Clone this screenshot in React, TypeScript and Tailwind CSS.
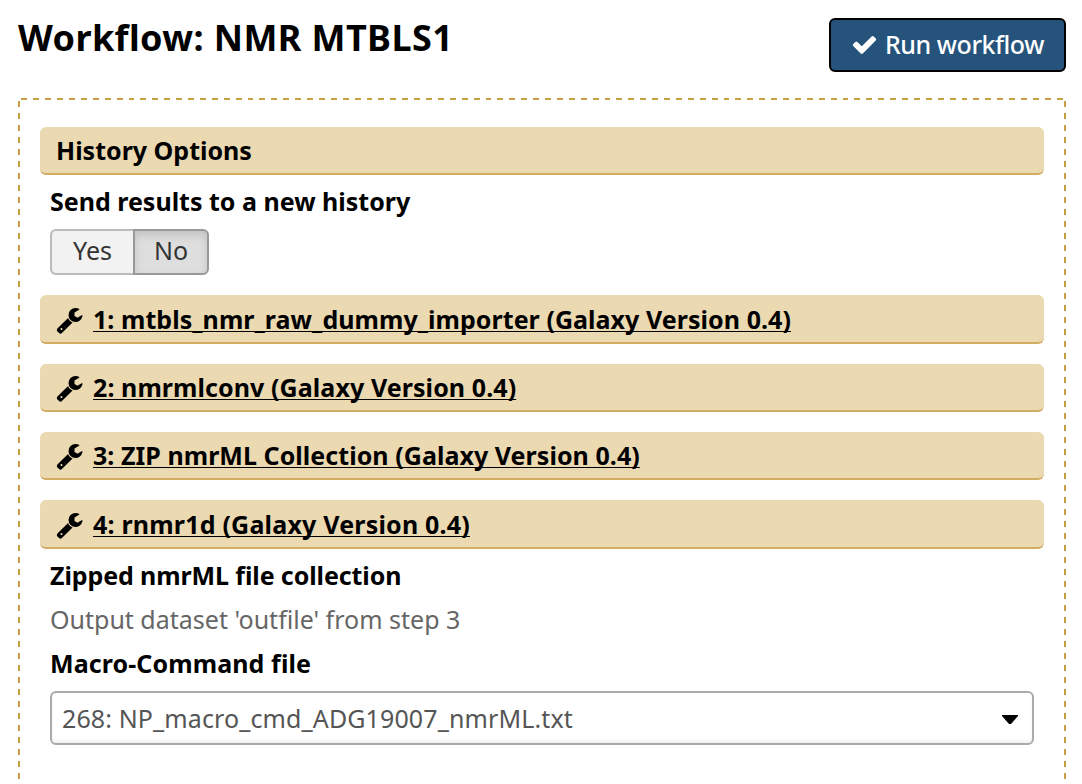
import React from "react";

function CheckIcon() {
  return (
    <svg viewBox="0 0 1792 1792" className="-mt-px h-[27px] w-[27px] shrink-0 fill-white">
      <path d="M1671 566q0 40-28 68l-724 724-136 136q-28 28-68 28t-68-28l-136-136-362-362q-28-28-28-68t28-68l136-136q28-28 68-28t68 28l294 295 656-657q28-28 68-28t68 28l136 136q28 28 28 68z" />
    </svg>
  );
}

function WrenchIcon() {
  return (
    <svg viewBox="0 0 1792 1792" className="mt-0.5 h-7 w-[29px] shrink-0 fill-black">
      <path d="M448 1472q0-26-19-45t-45-19-45 19-19 45 19 45 45 19 45-19 19-45zm644-420l-682 682q-37 37-90 37-52 0-91-37l-106-108q-38-36-38-90 0-53 38-91l681-681q39 98 114.5 173.5t173.5 114.5zm634-435q0 39-23 106-47 134-164.5 217.5t-258.5 83.5q-185 0-316.5-131.5t-131.5-316.5 131.5-316.5 316.5-131.5q58 0 121.5 16.5t107.5 46.5q16 11 16 28t-16 28l-293 169v224l193 107q5-3 79-48.5t135.5-81 70.5-35.5q15 0 23.5 10t8.5 25z" />
    </svg>
  );
}

const bar =
  "flex items-center rounded-md border-b-2 border-[#d3ac63] bg-[#ebd9b2] shrink-0";

const label = "ml-[10px] h-8 shrink-0 leading-8";

function Step({ title, className }: { title: string; className: string }) {
  return (
    <div className={`${bar} mt-5 pl-[15px] ${className}`}>
      <WrenchIcon />
      <a className="ml-[9px] h-7 leading-7 underline decoration-1 underline-offset-[2px] [text-decoration-skip-ink:none]">
        {title}
      </a>
    </div>
  );
}

export default function App() {
  return (
    <div className="flex h-[784px] w-[1082px] flex-col overflow-hidden bg-white pr-4 pl-[18px] font-['Noto_Sans','Open_Sans',sans-serif] text-[25px] whitespace-nowrap text-black">
      <header className="flex h-[98px] shrink-0 items-start justify-between pt-[18px]">
        <h1 className="text-[36px] leading-10 font-bold tracking-[0.4px]">Workflow: NMR MTBLS1</h1>
        <button className="flex h-[54px] w-[237px] items-center rounded-md border-2 border-black bg-[#25537b] pl-5 text-white">
          <CheckIcon />
          <span className="ml-[7px] font-medium tracking-[-0.45px]">Run workflow</span>
        </button>
      </header>
      <main className="flex h-[720px] shrink-0 flex-col bg-[image:repeating-linear-gradient(90deg,transparent_0_3.5px,#c6a041_3.5px_9.4px,transparent_9.4px_11.9px),repeating-linear-gradient(180deg,transparent_0_3px,#c6a041_3px_9px,transparent_9px_12px),repeating-linear-gradient(180deg,transparent_0_3px,#c6a041_3px_9px,transparent_9px_12px)] bg-[size:100%_2px,2px_100%,2px_100%] bg-[position:left_top,left_top,right_top] bg-no-repeat px-[22px] pt-[29px] font-bold">
        <div className={`${bar} h-12 pt-0.5 pl-4`}>History Options</div>
        <div className={`${label} mt-[10px]`}>Send results to a new history</div>
        <div className="mt-3 ml-[10px] flex h-[46px] shrink-0 font-normal text-[#333]">
          <button className="w-[83px] rounded-l-md border-2 border-r-0 border-[#bbb] bg-[#f2f2f2] pb-0.5">Yes</button>
          <button className="w-[76px] rounded-r-md border-2 border-[#999] bg-[#dedede] pb-0.5 shadow-[inset_0_4px_8px_rgba(0,0,0,0.13)]">No</button>
        </div>
        <Step title="1: mtbls_nmr_raw_dummy_importer (Galaxy Version 0.4)" className="h-[49px] tracking-[0.05px]" />
        <Step title="2: nmrmlconv (Galaxy Version 0.4)" className="h-12 tracking-[0.08px]" />
        <Step title="3: ZIP nmrML Collection (Galaxy Version 0.4)" className="h-12 tracking-[0.05px]" />
        <Step title="4: rnmr1d (Galaxy Version 0.4)" className="h-[49px] tracking-[0.2px]" />
        <div className={`${label} mt-[10px] tracking-[-0.1px]`}>Zipped nmrML file collection</div>
        <div className={`${label} mt-3 font-normal text-[#666]`}>Output dataset 'outfile' from step 3</div>
        <div className={`${label} mt-3 tracking-[0.1px]`}>Macro-Command file</div>
        <div className="mx-[10px] mt-3 flex h-[54px] shrink-0 items-center justify-between rounded-md border-2 border-[#aaa] bg-white pr-[14px] pl-[10px] font-normal text-[#555] shadow-[inset_0_-3px_3px_rgba(0,0,0,0.05)]">
          <span className="pt-0.5 tracking-[0.12px]">268: NP_macro_cmd_ADG19007_nmrML.txt</span>
          <svg viewBox="0 0 16 9" className="mt-[3px] h-[9px] w-4 fill-black">
            <path d="M0 0h16v1L9 9H7L0 1z" />
          </svg>
        </div>
      </main>
    </div>
  );
}
